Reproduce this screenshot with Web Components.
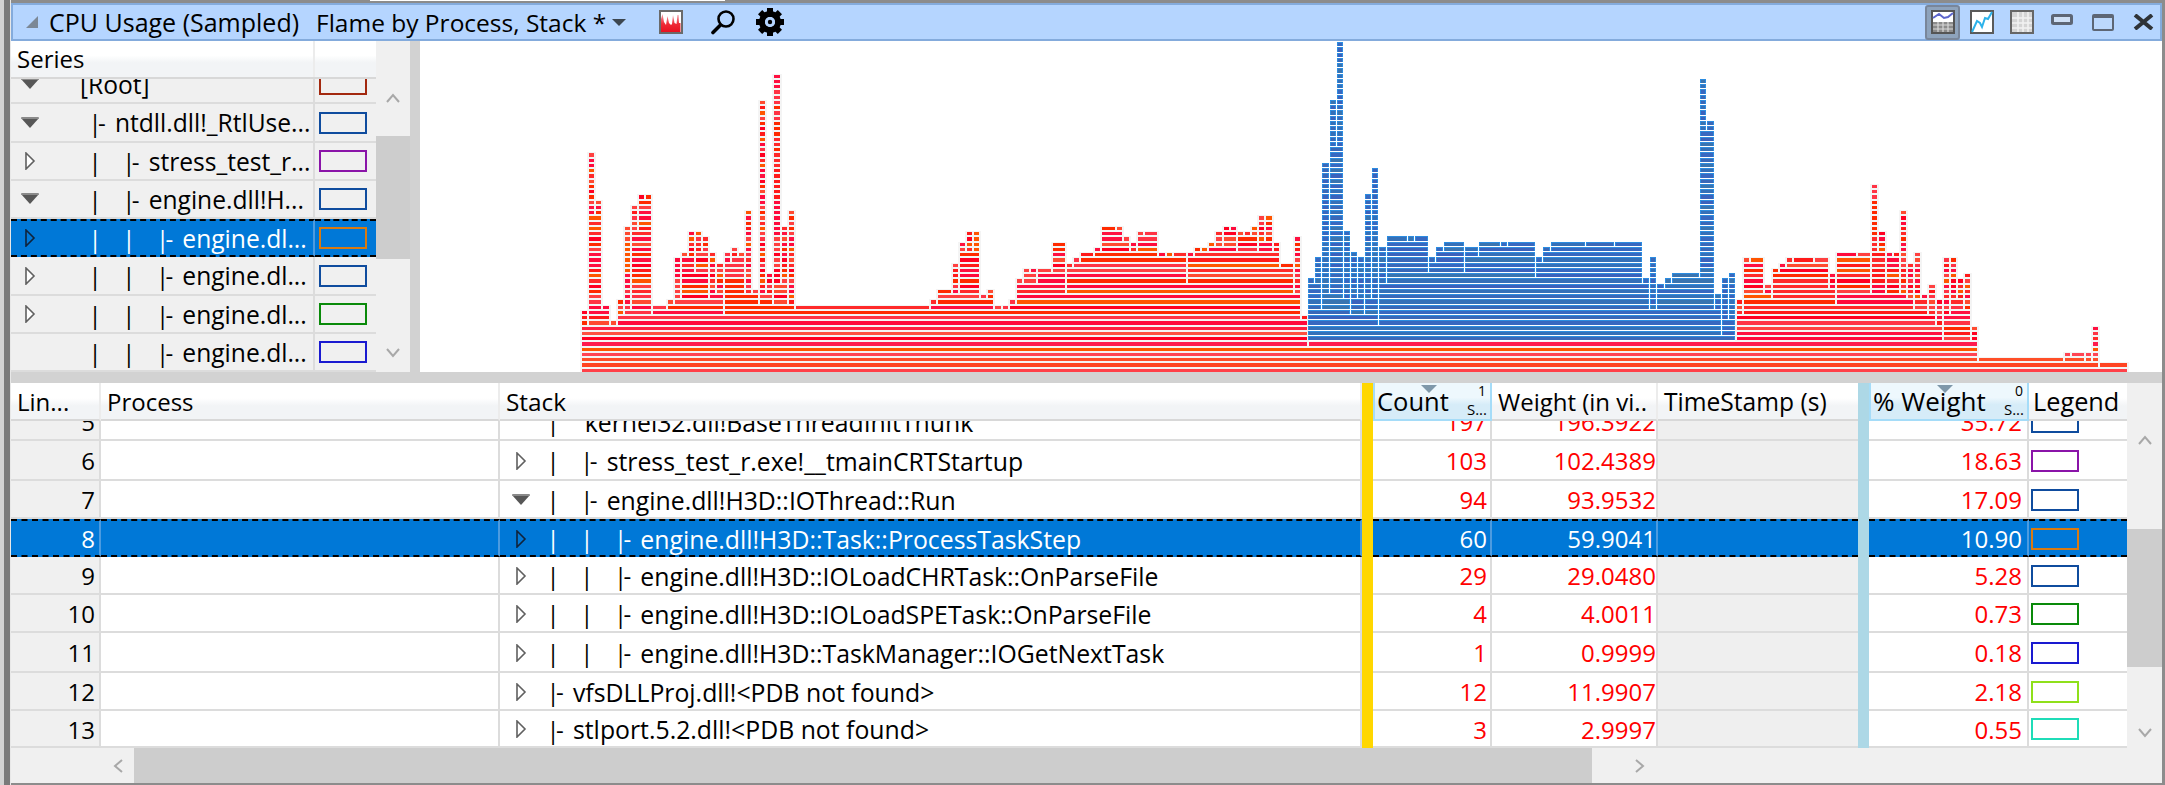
<!DOCTYPE html>
<html>
<head>
<meta charset="utf-8">
<title>CPU Usage (Sampled)</title>
<style>
  html, body { margin: 0; padding: 0; background: #d2d2d2; }
</style>
</head>
<body>
<wpa-window></wpa-window>
<script>
const FONT = `"Open Sans", "Liberation Sans", sans-serif`;

// "12*3 4" -> [12,12,12,4]
const expand = (s) => s.trim().split(/\s+/).flatMap((t) => {
  const [v, n] = t.split('*');
  return Array(Number(n || 1)).fill(Number(v));
});

class ScrollBar extends HTMLElement {
  connectedCallback() {
    const horizontal = this.hasAttribute('horizontal');
    const size = horizontal ? 'width' : 'height';
    const arrows = {
      u: '<polyline points="1,9 7,2 13,9"/>',
      d: '<polyline points="1,1 7,8 13,1"/>',
      l: '<polyline points="9,1 2,7 9,13"/>',
      r: '<polyline points="1,1 8,7 1,13"/>',
    };
    const parts = this.getAttribute('parts').split(' ').map((p) => {
      const kind = p[0];
      const px = p.slice(1);
      if (kind === 's') return `<div style="${size}:${px}px;flex:none"></div>`;
      if (kind === 't') return `<div class="thumb" style="${size}:${px}px"></div>`;
      const box = (kind === 'u' || kind === 'd') ? 'width="14" height="10"' : 'width="10" height="14"';
      return `<div class="btn" style="${size}:${px}px"><svg ${box}>${arrows[kind]}</svg></div>`;
    }).join('');
    this.attachShadow({ mode: 'open' });
    this.shadowRoot.innerHTML = `
      <style>
        :host {
          display: flex;
          flex-direction: ${horizontal ? 'row' : 'column'};
          background: #f0f0f0;
          flex: none;
          overflow: hidden;
        }
        .thumb { background: #cdcdcd; flex: none; align-self: stretch; }
        .btn { flex: none; display: flex; align-items: center; justify-content: center; }
        polyline { fill: none; stroke: #a8a8a8; stroke-width: 2; }
      </style>
      ${parts}
    `;
  }
}
customElements.define('scroll-bar', ScrollBar);

class LegendSwatch extends HTMLElement {
  constructor() {
    super();
    this.attachShadow({ mode: 'open' });
  }

  connectedCallback() {
    this.shadowRoot.innerHTML = `
      <style>
        :host {
          display: block;
          box-sizing: border-box;
          width: 48px;
          height: 22px;
          border: 2px solid ${this.getAttribute('color')};
        }
      </style>
    `;
  }
}
customElements.define('legend-swatch', LegendSwatch);

class TreeLabel extends HTMLElement {
  connectedCallback() {
    const pipes = Number(this.getAttribute('pipes') || 0);
    const exp = this.getAttribute('expander');
    const lead = Number(this.getAttribute('lead'));
    const expAt = Number(this.getAttribute('exp-at'));
    const selected = this.hasAttribute('selected');
    const plain = this.hasAttribute('plain');
    const label = this.getAttribute('label').replace(/</g, '&lt;').replace(/>/g, '&gt;');
    let icon = '';
    if (exp === 'open') {
      icon = `<svg width="18" height="12"><polygon points="0,1 18,1 9,11" fill="#575757"/><polygon points="0,0 18,0 17,2 1,2" fill="#8a8a8a"/></svg>`;
    } else if (exp === 'closed') {
      icon = `<svg width="18" height="18"><polygon points="5,1 13,9 5,17" fill="${selected ? '#0078d7' : '#fff'}" stroke="${selected ? '#10233a' : '#606060'}" stroke-width="1.6"/></svg>`;
    }
    let bars = '';
    for (let i = 0; i < pipes; i++) {
      const last = i === pipes - 1 && !plain;
      bars += `<span class="bar${last ? ' last' : ''}">|</span>`;
    }
    const dashed = !plain && pipes > 0;
    this.attachShadow({ mode: 'open' });
    this.shadowRoot.innerHTML = `
      <style>
        :host { display: flex; align-items: center; height: 100%; white-space: pre; overflow: hidden; }
        .lead { width: ${lead}px; flex: none; display: flex; align-items: center; padding-left: ${expAt}px; box-sizing: border-box; }
        .bar { display: inline-block; flex: none; width: 33.7px; box-sizing: border-box; text-indent: -4.5px; font-size: 24px; }
        .bar.last { width: 5px; }
        .dash { font-size: 24px; margin-right: 3px; }
      </style>
      <div class="lead">${icon}</div>${bars}${dashed ? '<span class="dash">- </span>' : ''}<span>${label}</span>
    `;
  }
}
customElements.define('tree-label', TreeLabel);

class TitleBar extends HTMLElement {
  constructor() {
    super();
    this.attachShadow({ mode: 'open' });
  }

  connectedCallback() {
    this.shadowRoot.innerHTML = `
      <style>
        :host {
          display: flex;
          align-items: center;
          box-sizing: border-box;
          height: 38px;
          flex: none;
          background: #b5d5ff;
          border: 2px solid #84abdc;
          color: #000;
          padding: 0 6px 0 13px;
        }
        .tri { margin-right: 11px; flex: none; }
        .name { width: 267px; flex: none; white-space: nowrap; font-size: 25px; }
        .preset { width: 296px; flex: none; white-space: nowrap; font-size: 24.5px; }
        .drop { flex: none; margin-right: 33px; }
        .tools { display: flex; align-items: center; }
        .right { display: flex; align-items: center; margin-left: auto; }
        .sel {
          box-sizing: border-box;
          width: 35px;
          height: 35px;
          background: #8ea3bc;
          border: 2px solid #79869a;
          border-radius: 3px;
          display: flex;
          align-items: center;
          justify-content: center;
        }
        svg { display: block; flex: none; }
      </style>
      <svg class="tri" width="12" height="12"><polygon points="0,12 12,12 12,0" fill="#7c8896"/></svg>
      <span class="name">CPU Usage (Sampled)</span>
      <span class="preset">Flame by Process, Stack *</span>
      <svg class="drop" width="14" height="7"><polygon points="0,0 14,0 7,7" fill="#3c4650"/></svg>
      <div class="tools">
        <svg width="24" height="24" viewBox="0 0 24 24" style="margin-right:27px">
          <defs><linearGradient id="r" x1="0" y1="0" x2="0" y2="1"><stop offset="0" stop-color="#f4a0a8"/><stop offset="0.55" stop-color="#ee2a36"/><stop offset="1" stop-color="#e81020"/></linearGradient></defs>
          <rect x="1" y="1" width="22" height="22" fill="#fff" stroke="#6a6a6a" stroke-width="2"/>
          <path fill="url(#r)" d="M2 22V9l1.500-5L5 12l2 3 1.500-9L10 13l2 2 1-1 1-9 1.500 8 2 1 1-9 1 0 .5 8 1.500 0V22z"/>
        </svg>
        <svg width="26" height="26" viewBox="0 0 26 26" style="margin-right:19px">
          <circle cx="16" cy="10" r="7.500" fill="none" stroke="#000" stroke-width="2.600"/>
          <line x1="10.500" y1="16" x2="3" y2="23.500" stroke="#000" stroke-width="3.600" stroke-linecap="round"/>
        </svg>
        <svg width="30" height="30" viewBox="0 0 30 30">
          <g fill="#000">
            <rect x="12" y="1" width="6" height="6"/>
            <rect x="12" y="1" width="6" height="6" transform="rotate(45 15 15)"/>
            <rect x="12" y="1" width="6" height="6" transform="rotate(90 15 15)"/>
            <rect x="12" y="1" width="6" height="6" transform="rotate(135 15 15)"/>
            <rect x="12" y="1" width="6" height="6" transform="rotate(180 15 15)"/>
            <rect x="12" y="1" width="6" height="6" transform="rotate(225 15 15)"/>
            <rect x="12" y="1" width="6" height="6" transform="rotate(270 15 15)"/>
            <rect x="12" y="1" width="6" height="6" transform="rotate(315 15 15)"/>
          </g>
          <circle cx="15" cy="15" r="8" fill="none" stroke="#000" stroke-width="6"/>
          <circle cx="15" cy="15" r="5" fill="#b5d5ff"/>
          <circle cx="15" cy="15" r="2.200" fill="#000"/>
        </svg>
      </div>
      <div class="right">
        <div class="sel">
          <svg width="24" height="24" viewBox="0 0 24 24">
            <rect x="1" y="1" width="22" height="22" fill="#fff" stroke="#555" stroke-width="2"/>
            <rect x="2" y="12" width="20" height="10" fill="#8b8b8b"/>
            <path d="M2 15h20M2 19h20M7 12v10M12 12v10M17 12v10" stroke="#d8d8d8" stroke-width="1.200"/>
            <path d="M2 8 8 4l5 4 4-1 5-4" fill="none" stroke="#5d66cc" stroke-width="2"/>
          </svg>
        </div>
        <svg width="24" height="24" viewBox="0 0 24 24" style="margin-left:10px">
          <rect x="1" y="1" width="22" height="22" fill="#fff" stroke="#5a5a5a" stroke-width="2"/>
          <path d="M2 22 7 11l3 2 2 4 3-9 3 1 4-7" fill="none" stroke="#2cb2ea" stroke-width="2"/>
        </svg>
        <svg width="24" height="24" viewBox="0 0 24 24" style="margin-left:16px">
          <rect x="1" y="1" width="22" height="22" fill="#d4d4d4" stroke="#666" stroke-width="2"/>
          <path d="M2 8h20M2 13h20M2 18h20M8 2v20M13 2v20M18 2v20" stroke="#f2f2f2" stroke-width="1.500"/>
        </svg>
        <svg width="22" height="11" viewBox="0 0 22 11" style="margin:-6px 0 0 17px">
          <rect x="1.500" y="1.500" width="19" height="8" rx="1" fill="#cfe0f6" stroke="#5d6675" stroke-width="3"/>
        </svg>
        <svg width="22" height="17" viewBox="0 0 22 17" style="margin:0 0 0 19px">
          <rect x="1" y="1" width="20" height="15" rx="1" fill="#bcd8fc" stroke="#5d6675" stroke-width="2"/>
          <rect x="1" y="1" width="20" height="3" fill="#5d6675"/>
        </svg>
        <svg width="21" height="16" viewBox="0 0 21 16" style="margin:0 0 0 19px">
          <path d="M2 1 19 15M19 1 2 15" stroke="#2f3338" stroke-width="4" fill="none"/>
        </svg>
      </div>
    `;
  }
}
customElements.define('title-bar', TitleBar);

class SeriesPanel extends HTMLElement {
  connectedCallback() {
    const rows = [
      { h: 38, exp: 'open', pipes: 0, label: '[Root]', color: '#a3290f', lead: 69 },
      { h: 39, exp: 'open', pipes: 1, label: 'ntdll.dll!_RtlUse...', color: '#0f4c9e' },
      { h: 38, exp: 'closed', pipes: 2, label: 'stress_test_r...', color: '#8a14a8' },
      { h: 38, exp: 'open', pipes: 2, label: 'engine.dll!H...', color: '#0f4c9e' },
      { h: 38, exp: 'closed', pipes: 3, label: 'engine.dl...', color: '#d97a10', selected: true },
      { h: 39, exp: 'closed', pipes: 3, label: 'engine.dl...', color: '#0f4c9e' },
      { h: 38, exp: 'closed', pipes: 3, label: 'engine.dl...', color: '#0a8a0a' },
      { h: 38, exp: '', pipes: 3, label: 'engine.dl...', color: '#1a1ad0' },
    ];
    const html = rows.map((r) => `
      <div class="row${r.selected ? ' sel' : ''}" style="height:${r.h}px">
        <div class="name"><tree-label lead="${r.lead || 82}" exp-at="10" expander="${r.exp}" pipes="${r.pipes}" label="${r.label}" ${r.selected ? 'selected' : ''}></tree-label></div>
        <div class="leg"><legend-swatch color="${r.color}"></legend-swatch></div>
      </div>`).join('');
    this.attachShadow({ mode: 'open' });
    this.shadowRoot.innerHTML = `
      <style>
        :host { display: flex; flex: none; width: 399px; background: #f0f0f0; }
        .main { width: 365px; flex: none; display: flex; flex-direction: column; overflow: hidden; }
        .head {
          height: 38px;
          flex: none;
          display: grid;
          grid-template-columns: 304px 61px;
          position: relative;
          z-index: 1;
          background: linear-gradient(#fff 0, #fff 40%, #f2f4f6 60%, #f2f4f6 100%);
          box-sizing: border-box;
          border-bottom: 2px solid #d8d8d8;
        }
        .head div { padding: 1px 0 0 6px; line-height: 34px; }
        .head div:first-child { border-right: 2px solid #ececec; }
        .list { margin-top: -13px; font-size: 24.6px; }
        .row { display: grid; grid-template-columns: 304px 61px; box-sizing: border-box; }
        .name, .leg { box-sizing: border-box; border-bottom: 2px solid #dcdcdc; }
        .name { border-right: 2px solid #dcdcdc; overflow: hidden; }
        .leg { display: flex; align-items: center; padding-left: 4px; }
        .sel { color: #fff; background: #0078d7; }
        .sel .name, .sel .leg { border-top: 2px dashed #000; border-bottom: 2px dashed #000; }
        .sel .name { border-right-color: #4c9be0; }
      </style>
      <div class="main">
        <div class="head"><div>Series</div><div></div></div>
        <div class="list">${html}</div>
      </div>
      <scroll-bar style="width:34px" parts="s38 u38 s19 t123 s75 d38"></scroll-bar>
    `;
  }
}
customElements.define('series-panel', SeriesPanel);

class FlameChart extends HTMLElement {
  connectedCallback() {
    const h = expand(`11 41 32 12 9 13 27 31 33 33 12 12 13 21 22 26 26 25 22 20
      22 23 22 30 15 51 18 56 27 30 12*19 13 15 15 20 24 26 26 14 15 12 12
      13 17 19 19 19 19 24 24 20 21 22 22 23 27 27 27 25 24 26 26
      26 22 22 22 22 22 23 23 24 26 27 27 26 26 27 29 29 24 20 20
      25 10 17 21 39 51 62 26 22 21 33 38 23 25*6 21
      23 24 24 24 23 23 24*8 21 23 24*13 17
      21 16 17 18*4 55 47 14 17 18 13 21 21 21 16 19 20 21
      21*5 18 22*5 35 26 22 22 30 20 22 14 16
      13 21 21 17 18 8 2*12 3 3 3 3 8 1*4`);
    // m[i]: highest level at which columns i and i+1 are one block
    const m = expand(`8 29 11 8 8 10 11 26 32 10 12 11 12 13 21 18 22 13 14 10
      20 21 14 14 12 14 12 16 12 11 12*18 11 12 15 14 14 22 22 13 13 11 11 11
      12 16 18 16 19 18 24 14 19 20 22 21 22 27 26 24 22 22 25 26
      21 21 21 22 16 21 22 22 23 23 26 22 25 25 22 24 22 19 20 14
      9 4 16 11 14 42 13 10 13 10 13 8 16 25 25 24 24 25 18 20
      22 24 24 18 23 21 24 24 23 23 24 24 24 17 20 22 24 24 24 24
      23 24 24 24 23 24 24 24 16 11 11 15 16 18 18 18 17 45 11 6
      9 5 10 20 21 14 13 18 19 20 21 21 20 21 15 12 22 22 21 22
      14 22 14 21 14 13 11 13 10 8 5 10 13 11 5 1 2*11 1 2 3 1 1 0 1 1 1`);
    const W = 7.129;
    const X0 = 161;
    const BOTTOM = 331;
    const STEP = 5.25;
    const base = ['#ff4048', '#ff4422', '#ff4f28', '#ff4453', '#ff5500', '#ff1a4d', '#ff0022', '#ff5040', '#ff2040'];
    const reds = ['#ff0022', '#ff1040', '#ff2a2a', '#ff4040', '#ff5500', '#ff2a00', '#ff0a3c', '#ff4a30', '#ff3344', '#ff1a1a'];
    const blues = ['#3a68b8', '#3570b8', '#3b62bc', '#3a74b0', '#3868c0'];
    let under = '';
    let over = '';
    for (let level = 0; level < 63; level++) {
      const y1 = Math.round(BOTTOM - STEP * level - 0.2);
      let i = 0;
      while (i < h.length) {
        if (h[i] < level) { i++; continue; }
        const start = i;
        while (i + 1 < h.length && h[i + 1] >= level && m[i] >= level) i++;
        const end = i;
        i++;
        const blue = level >= 6 && start >= 102 && start <= 161;
        const hash = (level * 31 + start * 17 + (level * start) % 7) % 97;
        if (blue) {
          const y0 = Math.max(0, Math.round(BOTTOM - STEP * (level + 1) + 0.9));
          const x = Math.round(X0 + W * start);
          const x2 = Math.round(X0 + W * (end + 1) - 1);
          over += `<rect x="${x}" y="${y0}" width="${x2 - x}" height="${y1 - y0}" fill="#2c8ce0"/>`;
          over += `<rect x="${x + 1}" y="${y0 + 1}" width="${x2 - x - 2}" height="${Math.max(1, y1 - y0 - 1)}" fill="${blues[hash % blues.length]}"/>`;
        } else {
          const y0 = Math.round(BOTTOM - STEP * (level + 1) + 1.8);
          const x = Math.round(X0 + W * start + 1);
          const x2 = Math.round(X0 + W * (end + 1) - 1);
          const fill = level < 9 && (level < 6 || start === 0) ? base[level] : reds[hash % reds.length];
          under += `<rect x="${x - 2}" y="${y0 - 1}" width="${x2 - x + 4}" height="${y1 - y0 + 2}" fill="#f4f4f4"/>`;
          over += `<rect x="${x}" y="${y0}" width="${x2 - x}" height="${y1 - y0}" fill="${fill}"/>`;
        }
      }
    }
    this.attachShadow({ mode: 'open' });
    this.shadowRoot.innerHTML = `
      <style>
        :host { display: block; flex: none; width: 1742px; background: #fff; overflow: hidden; }
        svg { display: block; }
      </style>
      <svg width="1742" height="331" shape-rendering="crispEdges">${under}${over}</svg>
    `;
  }
}
customElements.define('flame-chart', FlameChart);

class SortHeader extends HTMLElement {
  connectedCallback() {
    this.attachShadow({ mode: 'open' });
    this.shadowRoot.innerHTML = `
      <style>
        :host {
          display: block;
          position: relative;
          box-sizing: border-box;
          height: 100%;
          background: linear-gradient(#eef8fd 0, #eef8fd 40%, #d6ecf8 60%, #d6ecf8 100%);
          border: 2px solid #a5dcf8;
          border-top: 0;
          overflow: hidden;
        }
        .label { position: absolute; left: 2px; top: 0; line-height: 37px; white-space: nowrap; font-size: ${this.getAttribute('size')}px; }
        svg { position: absolute; left: 50%; margin-left: -12px; top: 2px; }
        .rank { position: absolute; right: 4px; top: 0; font-size: 14px; line-height: 16px; }
        .s { position: absolute; right: 3px; bottom: 2px; font-size: 15px; line-height: 16px; }
      </style>
      <span class="label">${this.getAttribute('label')}</span>
      <svg width="16" height="8"><polygon points="0,0 16,0 8,8" fill="#7f98aa"/></svg>
      <span class="rank">${this.getAttribute('rank')}</span>
      <span class="s">S...</span>
    `;
  }
}
customElements.define('sort-header', SortHeader);

class DataGrid extends HTMLElement {
  connectedCallback() {
    const cols = '90px 399px 862px 11px 119px 166px 200px 11px 160px 98px';
    const rows = [
      { n: 5, h: 38, pipes: 1, plain: true, exp: '', label: 'kernel32.dll!BaseThreadInitThunk', count: 197, weight: '196.3922', pct: '35.72', color: '#0f4c9e' },
      { n: 6, h: 40, pipes: 2, exp: 'closed', label: 'stress_test_r.exe!__tmainCRTStartup', count: 103, weight: '102.4389', pct: '18.63', color: '#8a14a8' },
      { n: 7, h: 38, pipes: 2, exp: 'open', label: 'engine.dll!H3D::IOThread::Run', count: 94, weight: '93.9532', pct: '17.09', color: '#0f4c9e' },
      { n: 8, h: 38, pipes: 3, exp: 'closed', label: 'engine.dll!H3D::Task::ProcessTaskStep', count: 60, weight: '59.9041', pct: '10.90', color: '#d97a10', selected: true },
      { n: 9, h: 38, pipes: 3, exp: 'closed', label: 'engine.dll!H3D::IOLoadCHRTask::OnParseFile', count: 29, weight: '29.0480', pct: '5.28', color: '#0f4c9e' },
      { n: 10, h: 38, pipes: 3, exp: 'closed', label: 'engine.dll!H3D::IOLoadSPETask::OnParseFile', count: 4, weight: '4.0011', pct: '0.73', color: '#0a8a0a' },
      { n: 11, h: 40, pipes: 3, exp: 'closed', label: 'engine.dll!H3D::TaskManager::IOGetNextTask', count: 1, weight: '0.9999', pct: '0.18', color: '#1a1ad0' },
      { n: 12, h: 38, pipes: 1, exp: 'closed', label: 'vfsDLLProj.dll!&lt;PDB not found&gt;', count: 12, weight: '11.9907', pct: '2.18', color: '#8fe01a' },
      { n: 13, h: 37, pipes: 1, exp: 'closed', label: 'stlport.5.2.dll!&lt;PDB not found&gt;', count: 3, weight: '2.9997', pct: '0.55', color: '#1fdcb8' },
    ];
    const html = rows.map((r) => `
      <div class="row${r.selected ? ' sel' : ''}" style="height:${r.h}px">
        <div class="c num line">${r.n}</div>
        <div class="c"></div>
        <div class="c stack"><tree-label lead="51" exp-at="12" expander="${r.exp}" pipes="${r.pipes}" label="${r.label}" ${r.plain ? 'plain' : ''} ${r.selected ? 'selected' : ''}></tree-label></div>
        <div class="bar y"></div>
        <div class="c num red" style="padding-right:3px">${r.count}</div>
        <div class="c num red" style="padding-right:0">${r.weight}</div>
        <div class="c ts"></div>
        <div class="bar b"></div>
        <div class="c num red" style="padding-right:5px">${r.pct}</div>
        <div class="c leg"><legend-swatch color="${r.color}"></legend-swatch></div>
      </div>`).join('');
    this.attachShadow({ mode: 'open' });
    this.shadowRoot.innerHTML = `
      <style>
        :host { display: flex; flex-direction: column; width: 2116px; flex: none; background: #fff; overflow: hidden; }
        .head, .row { display: grid; grid-template-columns: ${cols}; }
        .head {
          height: 38px;
          flex: none;
          position: relative;
          z-index: 1;
          background: linear-gradient(#fff 0, #fff 40%, #f2f4f6 60%, #f2f4f6 100%);
        }
        .h {
          box-sizing: border-box;
          border-bottom: 2px solid #d8d8d8;
          border-right: 2px solid #ececec;
          padding-left: 6px;
          line-height: 37px;
          white-space: nowrap;
          overflow: hidden;
        }
        .body { flex: 1; min-height: 0; overflow: hidden; }
        .list { margin-top: -18px; }
        .c {
          box-sizing: border-box;
          border-bottom: 2px solid #dcdcdc;
          border-right: 2px solid #dcdcdc;
          min-width: 0;
          overflow: hidden;
          padding-top: 1px;
        }
        .stack { font-size: 24.8px; }
        .num { display: flex; align-items: center; justify-content: flex-end; padding-right: 4px; }
        .line { background: #f0f0f0; }
        .red { color: #ff0000; }
        .ts { background: #efefef; border-right: 0; }
        .leg { display: flex; align-items: center; padding-left: 2px; border-right: 0; }
        .bar { width: 11px; }
        .y { background: #ffd700; }
        .b { background: #add8e6; }
        .sel { color: #fff; }
        .sel .red { color: #fff; }
        .sel .c {
          background: #0078d7;
          border-top: 2px dashed #000;
          border-bottom: 2px dashed #000;
          border-right-color: #4c9be0;
        }
      </style>
      <div class="head">
        <div class="h">Lin...</div>
        <div class="h">Process</div>
        <div class="h" style="font-size:24.400px">Stack</div>
        <div class="bar y"></div>
        <sort-header label="Count" rank="1" size="25.5"></sort-header>
        <div class="h">Weight (in vi..</div>
        <div class="h" style="border-right:0;font-size:24.600px">TimeStamp (s)</div>
        <div class="bar b"></div>
        <sort-header label="% Weight" rank="0" size="26"></sort-header>
        <div class="h" style="border-right:0;font-size:25.300px;padding-left:4px">Legend</div>
      </div>
      <div class="body"><div class="list">${html}</div></div>
    `;
  }
}
customElements.define('data-grid', DataGrid);

class WpaWindow extends HTMLElement {
  constructor() {
    super();
    this.attachShadow({ mode: 'open' });
  }

  connectedCallback() {
    this.shadowRoot.innerHTML = `
      <style>
        :host {
          display: flex;
          flex-direction: column;
          box-sizing: border-box;
          width: 2165px;
          height: 785px;
          overflow: hidden;
          padding: 3px 3px 2px 11px;
          font: 24px ${FONT};
          color: #000;
          background:
            linear-gradient(90deg, #d2d2d2 0 4px, #7a7a7a 4px 10px, #e8e8e8 10px) 0 0 / 11px 100% no-repeat,
            linear-gradient(#fff, #fff) 370px 0 / 355px 1px no-repeat,
            #8c8c8c;
        }
        .top { display: flex; height: 331px; flex: none; margin-top: 0; }
        .gutter { width: 10px; flex: none; background: #d2d2d2; }
        .split { height: 11px; flex: none; background: #d2d2d2; }
        .bottom { display: flex; flex: 1; min-height: 0; }
        .left { display: flex; flex-direction: column; width: 2116px; flex: none; }
        data-grid { flex: 1; min-height: 0; }
      </style>
      <title-bar></title-bar>
      <div class="top">
        <series-panel></series-panel>
        <div class="gutter"></div>
        <flame-chart></flame-chart>
      </div>
      <div class="split"></div>
      <div class="bottom">
        <div class="left">
          <data-grid></data-grid>
          <scroll-bar horizontal style="height:35px" parts="s90 l33 t1458 r96"></scroll-bar>
        </div>
        <scroll-bar style="width:35px" parts="s38 u38 s70 t138 s47 d38"></scroll-bar>
      </div>
    `;
  }
}
customElements.define('wpa-window', WpaWindow);
</script>
</body>
</html>
